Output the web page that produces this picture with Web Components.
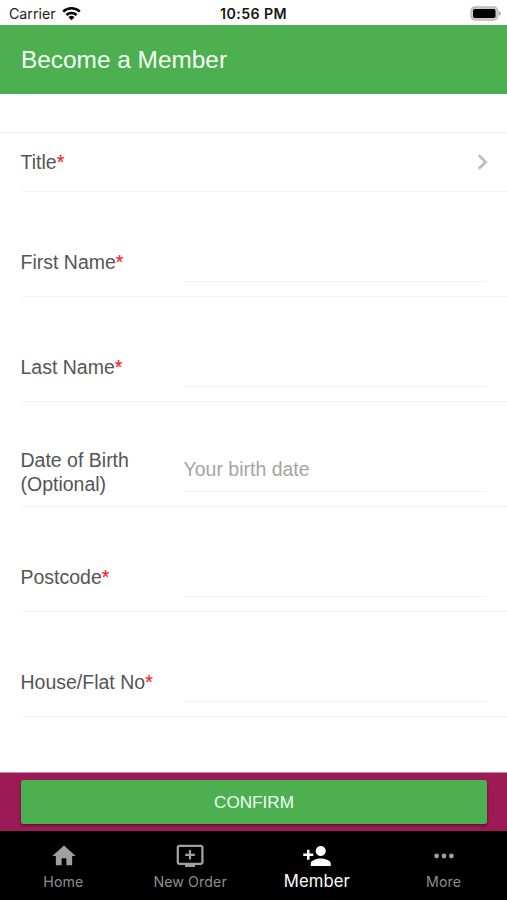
<!DOCTYPE html>
<html lang="en">
<head>
<meta charset="utf-8">
<title>Become a Member</title>
<style>
html, body { margin: 0; height: 100%; background: #fff; }
body { font-family: "Liberation Sans", Arial, sans-serif; overflow: hidden; }
</style>
</head>
<body>
<member-app></member-app>
<script>
function define(name, html) {
  const template = document.createElement('template');
  template.innerHTML = html;
  customElements.define(name, class extends HTMLElement {
    constructor() {
      super();
      this.attachShadow({ mode: 'open' }).append(template.content.cloneNode(true));
    }
  });
}

define('status-bar', `
<style>
:host { display: grid; grid-template-columns: 1fr auto 1fr; align-items: center; height: 25px; padding: 2px 6px 0 9px; box-sizing: border-box; font: 14.2px/20px Inter, sans-serif; color: #1c1c1c; }
.left { display: flex; align-items: center; gap: 6px; }
.time { font-weight: 600; font-size: 14.2px; color: #151515; letter-spacing: .4px; margin: 0 1px 0 -2px; }
svg { display: block; }
.battery { justify-self: end; }
</style>
<div class="left"><span>Carrier</span>
<svg width="19" height="15" viewBox="0 0 19 15"><g fill="none" stroke="#050505" stroke-width="2.5"><path d="M1.2 5.6a11.8 11.8 0 0 1 16.6 0"/><path d="M4.4 9a7.3 7.3 0 0 1 10.2 0"/></g><path d="M9.5 14.2L6.5 11.2a4.3 4.3 0 0 1 6 0z" fill="#050505"/></svg></div>
<span class="time">10:56 PM</span>
<svg class="battery" width="31" height="15" viewBox="0 0 31 15"><rect x=".9" y="1" width="27" height="13" rx="4" fill="#ccc" stroke="#bbb" stroke-width="1.3"/><rect x="3" y="3" width="22.5" height="9" rx="1.7" fill="#000"/><path d="M29 5.3q1.9 .6 1.9 2.2t-1.9 2.2z" fill="#aaa"/></svg>
`);

define('title-bar', `
<style>
:host { display: flex; align-items: center; height: 68.5px; padding: 2px 21px 0; box-sizing: border-box; background: #4caf50; color: #f7fff5; font-size: 24.4px; line-height: 30px; }
</style><slot></slot>`);

define('form-row', `
<style>
:host { display: block; height: 105px; padding-left: 20.5px; box-sizing: border-box; font-size: 19.5px; line-height: 24.5px; color: #555; }
.row { display: flex; align-items: flex-end; height: 100%; box-sizing: border-box; border-bottom: 1px solid #f3f3f3; padding-right: 20px; }
.label { width: 163px; flex: none; align-self: flex-end; padding-bottom: 21px; white-space: nowrap; }
:host([two-line]) .label { padding-bottom: 10px; line-height: 24px; }
.field { flex: 1; height: 46px; border-bottom: 1px solid #f3f3f3; margin-bottom: 14px; box-sizing: border-box; padding-top: 11px; color: #a5a5a5; }
:host([select]) { height: 58.5px; }
:host([select]) .label { padding-bottom: 16.5px; flex: 1; }
:host([select]) .field { display: none; }
svg { display: none; align-self: center; margin-right: -1px; }
:host([select]) svg { display: block; }
</style>
<div class="row"><div class="label"><slot></slot></div><div class="field"><slot name="hint"></slot></div>
<svg width="11" height="16" viewBox="0 0 11 16"><path d="M1.8 1.2l6.8 6.8l-6.8 6.8" fill="none" stroke="#bdbdbd" stroke-width="2.8"/></svg></div>`);

define('required-mark', `<style>:host { color: #ff1a1a; -webkit-text-stroke: .2px #ff1a1a; }</style>*`);

define('confirm-bar', `
<style>
:host { display: block; height: 59px; box-sizing: border-box; background: #9c1b56; border-top: 1px solid #c787a4; padding: 7px 20px 7px 21px; }
button { display: block; width: 100%; height: 44px; border: 0; border-radius: 2.5px; background: #4caf50; color: #f0fff0; padding: 0; font: 17.1px/45px "Liberation Sans", Arial, sans-serif; box-shadow: 0 2px 3px rgba(0,0,0,.25), 0 1px 2px rgba(0,0,0,.2); }
</style><button><slot></slot></button>`);

define('tab-item', `
<style>
:host { display: flex; flex: 1; flex-direction: column; align-items: center; color: #8e8e8e; font: 14.2px/18px Inter, sans-serif; letter-spacing: .1px; padding-top: 10px; box-sizing: border-box; }
:host([active]) { color: #fff; font-size: 16.7px; }
.icon { height: 29px; display: flex; align-items: center; }
.text { margin-top: 3px; }
:host([active]) .text { margin-top: 2px; }
</style><div class="icon"><slot name="icon"></slot></div><div class="text"><slot></slot></div>`);

define('tab-bar', `
<style>
:host { display: flex; height: 69px; background: #000; }
svg { display: block; fill: #a0a0a0; }
.nudge { margin-left: 1.5px; }
</style>
<tab-item><svg class="nudge" slot="icon" width="28" height="28" viewBox="0 0 24 24"><path d="M10 20v-6h4v6h5v-8h3L12 3 2 12h3v8z"/></svg>Home</tab-item>
<tab-item><svg slot="icon" width="28" height="24" viewBox="0 0 28 24"><rect x="1.8" y="1.8" width="24.6" height="18" rx="1.8" fill="none" stroke="#a0a0a0" stroke-width="2.3"/><path d="M9 20h10v3H9zM12.9 6h2.2v3.7h3.7v2.2h-3.7v3.7h-2.2v-3.7H9.2V9.700h3.7z"/></svg>New Order</tab-item>
<tab-item active><svg slot="icon" width="30" height="30" viewBox="0 0 24 24" style="fill:#fff"><path d="M15 12c2.21 0 4-1.79 4-4s-1.79-4-4-4-4 1.790-4 4 1.790 4 4 4zm-9-2V7H4v3H1v2h3v3h2v-3h3v-2H6zm9 4c-2.670 0-8 1.340-8 4v2h16v-2c0-2.660-5.330-4-8-4z"/></svg>Member</tab-item>
<tab-item><svg slot="icon" width="20" height="6" viewBox="0 0 20 6"><circle cx="2.6" cy="3" r="2.4"/><circle cx="10" cy="3" r="2.4"/><circle cx="17.4" cy="3" r="2.4"/></svg>More</tab-item>`);

define('member-app', `
<style>
:host { display: flex; flex-direction: column; height: 900px; }
main { flex: 1; padding-top: 38.5px; min-height: 0; overflow: hidden; }
.list { border-top: 1px solid #eee; }
</style>
<status-bar></status-bar>
<title-bar>Become a Member</title-bar>
<main><div class="list">
<form-row select>Title<required-mark></required-mark></form-row>
<form-row>First Name<required-mark></required-mark></form-row>
<form-row>Last Name<required-mark></required-mark></form-row>
<form-row two-line>Date of Birth<br>(Optional)<span slot="hint">Your birth date</span></form-row>
<form-row>Postcode<required-mark></required-mark></form-row>
<form-row>House/Flat No<required-mark></required-mark></form-row>
</div></main>
<confirm-bar>CONFIRM</confirm-bar>
<tab-bar></tab-bar>`);
</script>
</body>
</html>
